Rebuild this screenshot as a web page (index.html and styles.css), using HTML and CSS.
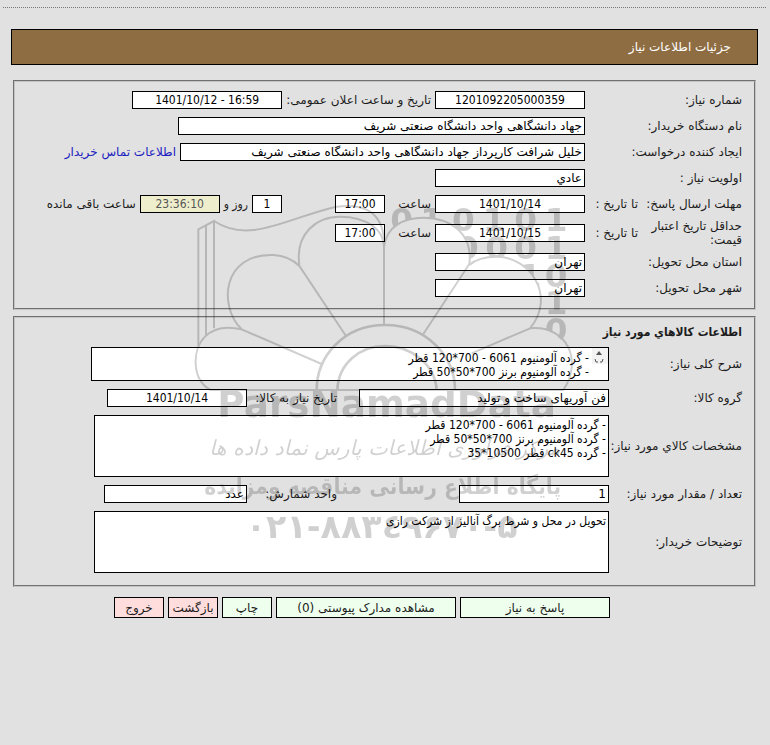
FILE: index.html
```html
<!DOCTYPE html>
<html lang="fa" dir="rtl">
<head>
<meta charset="utf-8">
<meta name="viewport" content="width=device-width, initial-scale=1.0">
<title>جزئیات اطلاعات نیاز</title>
<link rel="stylesheet" href="styles.css">
</head>
<body>

<div class="page">
  <h1 class="page-title">جزئیات اطلاعات نیاز</h1>

  <form>
    <!-- Need details -->
    <fieldset class="box need">
      <div class="row">
        <label class="name" for="needNo">شماره نیاز:</label>
        <input class="w150 num" id="needNo" value="1201092205000359" readonly>
        <label for="announce">تاریخ و ساعت اعلان عمومی:</label>
        <input class="w150 num" id="announce" value="1401/10/12 - 16:59" readonly>
      </div>
      <div class="row">
        <label class="name" for="buyer">نام دستگاه خریدار:</label>
        <input class="w407" id="buyer" value="جهاد دانشگاهی واحد دانشگاه صنعتی شریف" readonly>
      </div>
      <div class="row">
        <label class="name" for="creator">ایجاد کننده درخواست:</label>
        <input class="w405" id="creator" value="خلیل شرافت کارپرداز جهاد دانشگاهی واحد دانشگاه صنعتی شریف" readonly>
        <a href="#">اطلاعات تماس خریدار</a>
      </div>
      <div class="row">
        <label class="name" for="priority">اولویت نیاز :</label>
        <input class="w150" id="priority" value="عادي" readonly>
      </div>
      <div class="row">
        <div class="name split">
          <span class="main">مهلت ارسال پاسخ:</span>
          <label for="replyDate">تا تاریخ :</label>
        </div>
        <input class="w150 num" id="replyDate" value="1401/10/14" readonly>
        <label class="hour" for="replyTime">ساعت</label>
        <input class="w50 num" id="replyTime" value="17:00" readonly>
        <input class="w30 num days" id="days" value="1" readonly>
        <label class="narrow" for="days">روز و</label>
        <input class="w80 num left-time" id="leftTime" value="23:36:10" readonly>
        <label for="leftTime">ساعت باقی مانده</label>
      </div>
      <div class="row">
        <div class="name split">
          <span class="main">حداقل تاریخ اعتبار قیمت:</span>
          <label for="priceDate">تا تاریخ :</label>
        </div>
        <input class="w150 num" id="priceDate" value="1401/10/15" readonly>
        <label class="hour" for="priceTime">ساعت</label>
        <input class="w50 num" id="priceTime" value="17:00" readonly>
      </div>
      <div class="row">
        <label class="name" for="province">استان محل تحویل:</label>
        <input class="w150" id="province" value="تهران" readonly>
      </div>
      <div class="row">
        <label class="name" for="city">شهر محل تحویل:</label>
        <input class="w150" id="city" value="تهران" readonly>
      </div>
    </fieldset>

    <!-- Goods details -->
    <fieldset class="box goods">
      <h2>اطلاعات کالاهاي مورد نیاز</h2>
      <div class="row">
        <label class="name" for="summary">شرح کلی نیاز:</label>
        <div class="scroll-text">
          <textarea id="summary" readonly>- گرده آلومنیوم 6061 - 700*120 قطر
- گرده آلومنیوم برنز 700*50*50 قطر</textarea>
          <svg class="arrows" viewBox="0 0 17 32" aria-hidden="true">
            <rect x="1" y="0" width="16" height="16" fill="#f3f3f3"/>
            <path d="M5 7 L8 3 L11 7 Z" fill="#555"/>
            <path d="M4 11 L5 14 H7 M12 11 L11 14 H9" fill="none" stroke="#555"/>
          </svg>
        </div>
      </div>
      <div class="row">
        <label class="name" for="group">گروه کالا:</label>
        <div class="first"><input class="w250" id="group" value="فن آوریهای ساخت و تولید" readonly></div>
        <label class="second" for="goodsDate">تاریخ نیاز به کالا:</label>
        <input class="w140 num" id="goodsDate" value="1401/10/14" readonly>
      </div>
      <div class="row">
        <label class="name" for="spec">مشخصات کالاي مورد نیاز:</label>
        <textarea class="tall" id="spec" readonly>- گرده آلومنیوم 6061 - 700*120 قطر
- گرده آلومنیوم برنز 700*50*50 قطر
- گرده ck45 قطر 10500*35</textarea>
      </div>
      <div class="row">
        <label class="name" for="amount">تعداد / مقدار مورد نیاز:</label>
        <div class="first"><input class="w150" id="amount" value="1" readonly></div>
        <label class="second" for="unit">واحد شمارش:</label>
        <input class="w143" id="unit" value="عدد" readonly>
      </div>
      <div class="row">
        <label class="name" for="notes">توضیحات خریدار:</label>
        <textarea class="tall" id="notes" readonly>تحویل در محل و شرط برگ آنالیز از شرکت رازی</textarea>
      </div>
    </fieldset>

    <div class="buttons">
      <button type="button" class="w150">پاسخ به نیاز</button>
      <button type="button" class="w180">مشاهده مدارک پیوستی (0)</button>
      <button type="button" class="w50">چاپ</button>
      <button type="button" class="w50 red">بازگشت</button>
      <button type="button" class="w50 red">خروج</button>
    </div>
  </form>

  <!-- Watermark -->
  <svg class="watermark" viewBox="0 0 1200 1080" aria-hidden="true">
    <mask id="petals">
      <rect width="1200" height="1080" fill="#fff"/>
      <path fill="#000" d="M582 170 C590 110 640 83 700 83 C780 83 850 130 838 225 C860 205 890 200 920 200 C1020 200 1100 320 1020 415 C1080 405 1150 460 1150 540 L582 600 Z"/>
    </mask>
    <g class="lines">
      <path d="M25 470 V118 L72 93 V415 M48 435 V107"/>
      <path d="M72 93 C180 165 300 80 440 50 C500 42 575 50 582 150"/>
      <path d="M395 522 L155 418 C85 350 95 190 250 195 C290 197 315 215 328 228 L468 438"/>
      <path d="M328 225 C315 130 380 80 450 80 C530 80 582 120 582 170 V405"/>
      <path d="M582 170 C590 110 640 83 700 83 C780 83 850 130 838 222 L700 432"/>
      <path d="M838 225 C860 205 890 200 920 200 C1020 200 1100 320 1020 415 L845 490"/>
      <path d="M155 418 C110 408 70 415 45 440 C5 480 5 570 62 600 H1120 C1180 510 1130 405 1020 415"/>
      <path class="thick" d="M380 600 C380 500 460 405 585 405 C710 405 795 500 795 600 M442 600 C445 520 510 468 585 468 C660 468 735 520 740 600"/>
    </g>
    <g class="bits" mask="url(#petals)">
      <text x="635" y="122">0</text>
      <text x="725" y="122">1</text>
      <text x="820" y="122">0</text>
      <text x="912" y="122">1</text>
      <text x="1007" y="122">0</text>
      <text x="1098" y="122">1</text>
      <text x="832" y="206">0</text>
      <text x="920" y="206">0</text>
      <text x="1007" y="206">0</text>
      <text x="1098" y="206">1</text>
      <text x="1020" y="290">1</text>
      <text x="1098" y="290">0</text>
      <text x="1098" y="372">1</text>
      <text x="1098" y="454">0</text>
    </g>
    <text class="brand" x="590" y="682">ParsNamadData</text>
    <text class="script" x="585" y="795">مرکز فرآوری اطلاعات پارس نماد داده ها</text>
    <text class="slogan" x="578" y="912">پایگاه اطلاع رسانی مناقصه ومزایده</text>
    <text class="phone" x="575" y="1044">۰۲۱-۸۸۳٤۹۶۷۰-۵</text>
  </svg>
</div>

</body>
</html>
```

FILE: styles.css
```css
* {
  box-sizing: border-box;
}

body {
  margin: 0;
  background-color: #e1e1e1;
  color: #1c1c1c;
  font-family: "DejaVu Sans", sans-serif;
  font-size: 12px;
  line-height: 14px;
}

.page {
  position: relative;
  margin: 7px 4px 0 3px;
  padding: 21px 8px 0;
  border-top: 1px dotted #777;
}

.page-title {
  margin: 0 0 15px;
  padding: 10px 26px;
  border: 1px solid #000;
  background-color: #8f6d42;
  color: #fff;
  font-size: 12px;
  font-weight: normal;
  line-height: 14px;
}

/* Bordered groups */
.box {
  display: flex;
  flex-direction: column;
  min-width: 0;
  margin: 0 2px 6px;
  border: 2px groove #c4c4c4;
}

.need {
  gap: 4px;
  padding: 7px 12px 9px;
}

.goods {
  gap: 8px;
  padding: 7px 12px 12px;
}

h2 {
  margin: 0;
  font-family: "DejaVu Sans Condensed", "DejaVu Sans", sans-serif;
  font-size: 12px;
  line-height: 14px;
}

.row {
  display: flex;
  align-items: center;
  gap: 4px;
}

.need .row {
  min-height: 22px;
}

label,
a {
  white-space: nowrap;
}

a {
  color: #2020c0;
  text-decoration: none;
}

.name {
  flex: none;
  width: 153px;
}

.goods .name {
  width: 129px;
}

.split {
  display: flex;
  align-items: center;
  gap: 4px;
}

.split .main {
  width: 100px;
}

.hour {
  width: 42px;
}

.days {
  margin-right: 49px;
}

.narrow {
  font-family: "DejaVu Sans Condensed", "DejaVu Sans", sans-serif;
}

.first {
  width: 250px;
}

.second {
  width: 86px;
  margin-right: 18px;
}

/* Fields */
input,
textarea {
  display: block;
  flex: none;
  margin: 0;
  border: 1px solid #000;
  border-radius: 0;
  background-color: #fff;
  color: #000;
  font: inherit;
}

input {
  height: 18px;
  padding: 0 2px;
}

textarea {
  height: 34px;
  padding: 2px;
  overflow: hidden;
  resize: none;
  font-family: "DejaVu Sans Condensed", "DejaVu Sans", sans-serif;
}

.tall {
  width: 515px;
  height: 62px;
}

.num {
  direction: ltr;
  font-family: "DejaVu Sans Condensed", "DejaVu Sans", sans-serif;
  text-align: center;
}

.left-time {
  background-color: #eeeecc;
  color: #555;
}

.scroll-text {
  position: relative;
  width: 518px;
}

.scroll-text textarea {
  width: 100%;
  padding: 3px 19px 0 2px;
}

.arrows {
  position: absolute;
  top: 1px;
  right: 1px;
  width: 17px;
  height: 32px;
}

.w30 { width: 30px; }
.w50 { width: 50px; }
.w80 { width: 80px; }
.w140 { width: 140px; }
.w143 { width: 143px; }
.w150 { width: 150px; }
.w180 { width: 180px; }
.w250 { width: 250px; }
.w405 { width: 405px; }
.w407 { width: 407px; }

/* Buttons */
.buttons {
  display: flex;
  gap: 4px;
  margin-top: 10px;
  padding-right: 148px;
}

button {
  height: 21px;
  padding: 0;
  border: 1px solid #000;
  border-radius: 0;
  background-color: #eeffee;
  color: #1c1c1c;
  font: inherit;
  white-space: nowrap;
  cursor: pointer;
}

.red {
  background-color: #ffdddd;
}

/* Watermark over the form */
.watermark {
  position: absolute;
  top: 182px;
  left: 187px;
  width: 400px;
  height: 360px;
  opacity: 0.18;
  pointer-events: none;
}

.watermark text {
  direction: ltr;
  text-anchor: middle;
}

.lines {
  fill: none;
  stroke: #000;
  stroke-width: 6px;
}

.lines .thick {
  stroke-width: 8px;
}

.bits {
  font-size: 98px;
  font-weight: bold;
}

.brand {
  font-size: 112px;
  font-weight: bold;
}

.watermark .script {
  direction: rtl;
  font-size: 62px;
  font-style: italic;
}

.watermark .slogan {
  direction: rtl;
  font-family: "DejaVu Sans Condensed", "DejaVu Sans", sans-serif;
  font-size: 68px;
  font-weight: bold;
}

.phone {
  font-size: 100px;
  font-weight: bold;
}
```
